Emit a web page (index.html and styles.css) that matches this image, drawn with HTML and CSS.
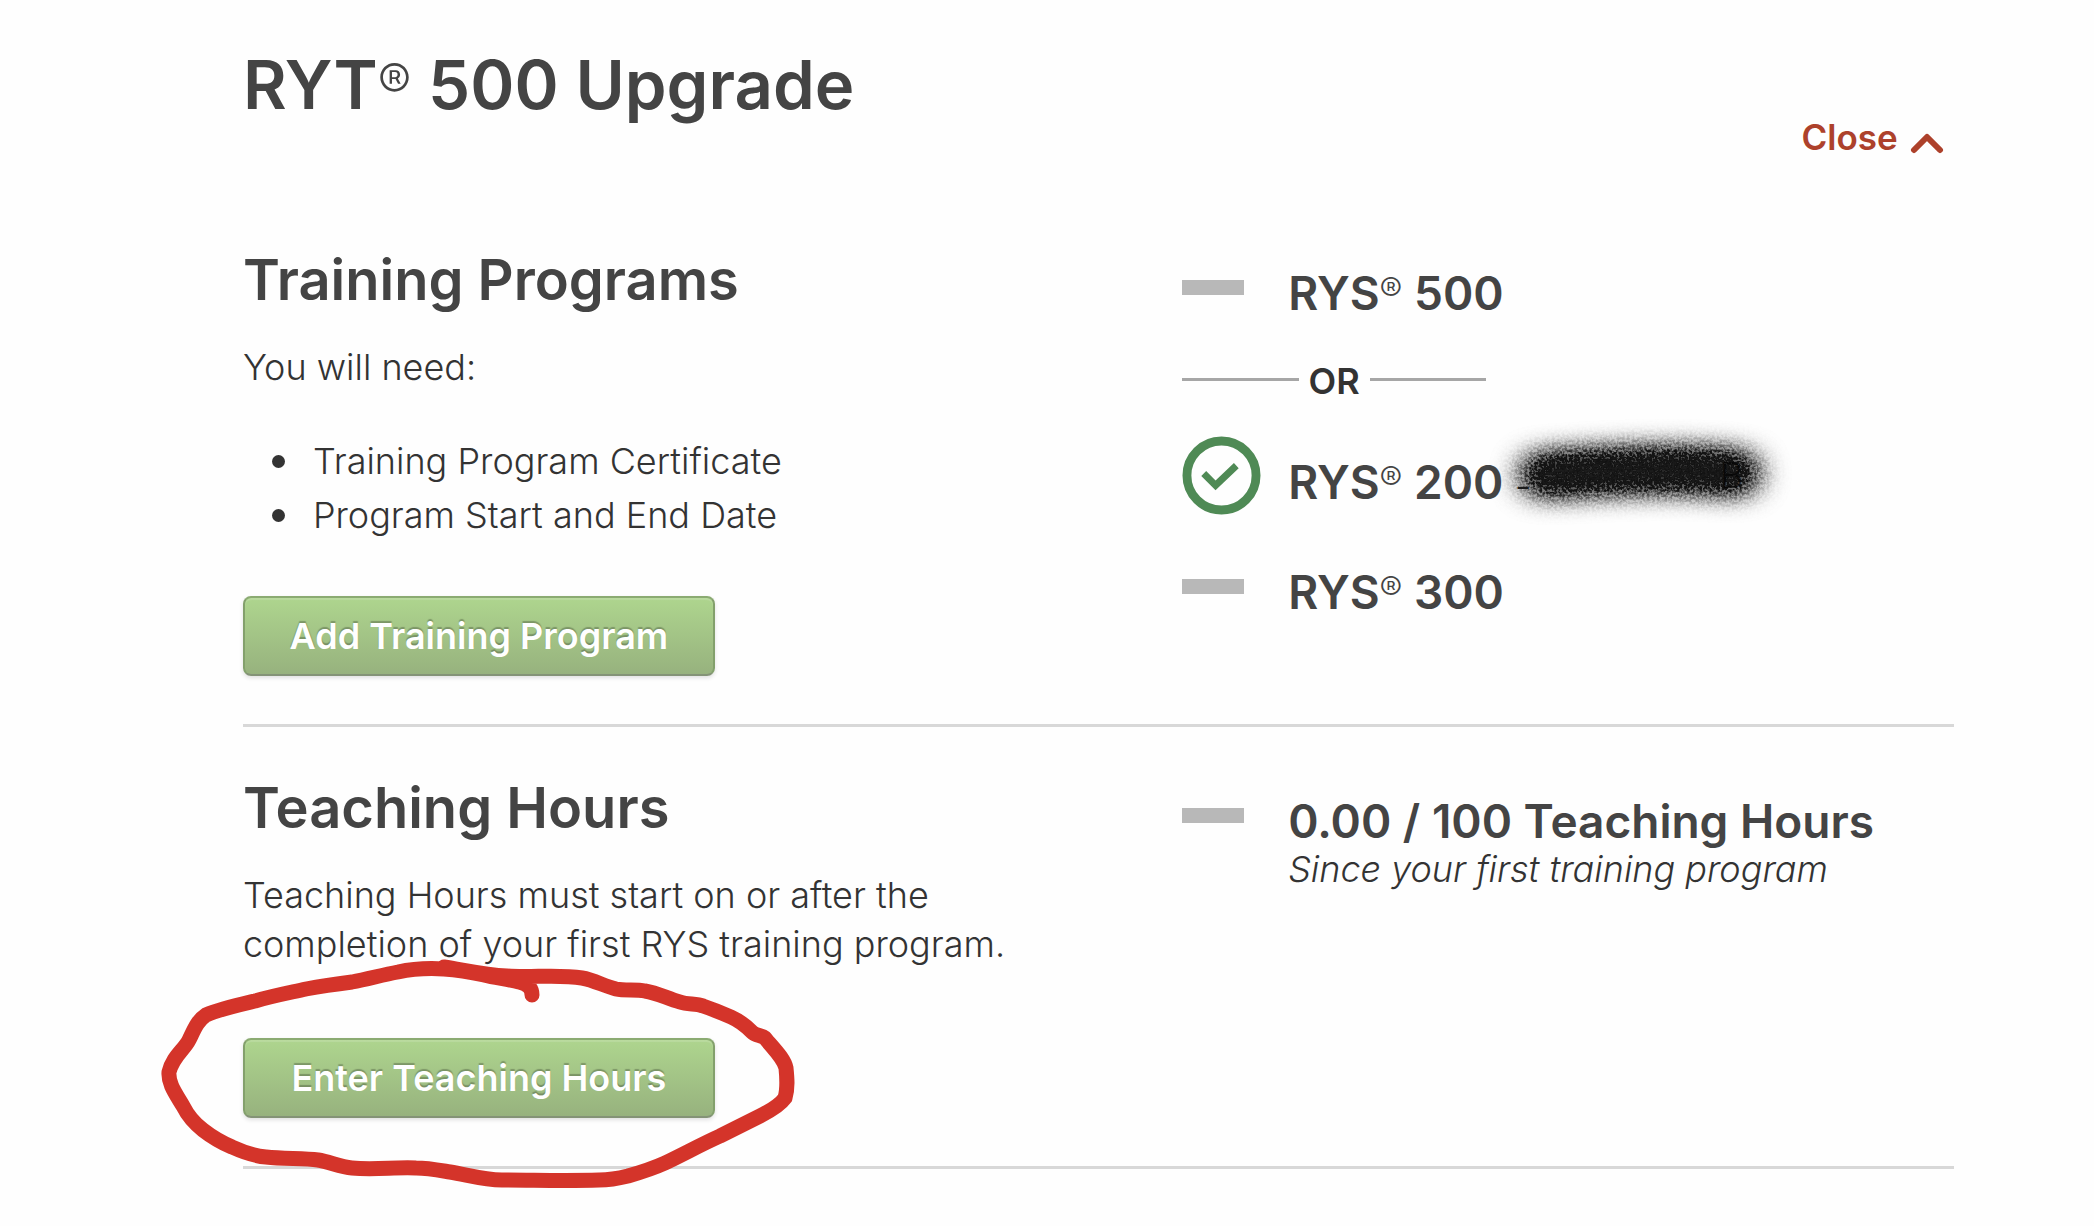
FILE: index.html
```html
<!DOCTYPE html>
<html lang="en">
<head>
  <meta charset="utf-8">
  <meta name="viewport" content="width=device-width, initial-scale=1">
  <title>RYT® 500 Upgrade</title>
  <link rel="stylesheet" href="styles.css">
</head>
<body>
  <main class="page">
    <header class="page-header">
      <h1 class="page-title">RYT<sup class="reg">®</sup> 500 Upgrade</h1>
      <a class="close-link" href="#">Close
        <svg class="chevron" viewBox="0 0 34 22" aria-hidden="true"><path d="M4 18 17 5l13 13"/></svg>
      </a>
    </header>

    <section class="section">
      <div class="details">
        <h2 class="section-title">Training Programs</h2>
        <p class="text">You will need:</p>
        <ul class="needs">
          <li>Training Program Certificate</li>
          <li>Program Start and End Date</li>
        </ul>
        <div class="action"><button class="button" type="button">Add Training Program</button></div>
      </div>

      <div class="progress">
        <div class="item">
          <span class="dash"></span>
          <h3 class="item-title">RYS<sup class="reg">®</sup> 500</h3>
        </div>
        <div class="or">OR</div>
        <div class="item item-done">
          <svg class="check" viewBox="0 0 80 80" role="img" aria-label="Complete">
            <circle cx="40" cy="40" r="35"/>
            <path class="tick" d="M22 38l12 12 21-20"/>
          </svg>
          <h3 class="item-title">RYS<sup class="reg">®</sup> 200 <span class="school">-</span>
            <svg class="scribble" viewBox="0 0 320 120" aria-hidden="true">
              <defs>
                <filter id="spray" x="0" y="0" width="320" height="120" filterUnits="userSpaceOnUse" color-interpolation-filters="sRGB">
                  <feGaussianBlur in="SourceGraphic" stdDeviation="15 12" result="soft"/>
                  <feTurbulence type="fractalNoise" baseFrequency="0.4" numOctaves="2" seed="4" result="noise"/>
                  <feColorMatrix in="noise" type="matrix" values="0 0 0 0 1  0 0 0 0 1  0 0 0 0 1  0 0 3 0 -1" result="grain"/>
                  <feComposite in="soft" in2="grain" operator="arithmetic" k1="0.8" k2="0.95" k3="0" k4="0"/>
                </filter>
              </defs>
              <g filter="url(#spray)"><path class="spray" d="M64 65 C120 61 200 57 256 63"/></g>
              <text class="spray-letter" x="240" y="78">B</text>
            </svg>
          </h3>
        </div>
        <div class="item">
          <span class="dash"></span>
          <h3 class="item-title">RYS<sup class="reg">®</sup> 300</h3>
        </div>
      </div>
    </section>

    <section class="section">
      <div class="details">
        <h2 class="section-title">Teaching Hours</h2>
        <p class="text">Teaching Hours must start on or after the completion of your first RYS training program.</p>
        <div class="action action-late">
          <button class="button" type="button">Enter Teaching Hours</button>
          <svg class="marker" viewBox="150 950 660 250" aria-hidden="true">
            <path d="M532 997C532 990 528 986 519 984C508 981 496 980 484 977C470 974 458 972 444 971C428 970 412 971 398 974C382 977 368 981 352 984C336 986 322 988 306 991C288 995 272 998 255 1003C238 1007 220 1011 206 1017C197 1023 194 1032 189 1042C184 1052 173 1058 169 1074C168 1086 176 1096 183 1108C188 1118 194 1125 203 1132C212 1139 220 1144 232 1149C243 1154 254 1158 266 1159C284 1161 304 1160 318 1162C330 1164 340 1169 352 1170C374 1172 396 1169 416 1170C428 1170 438 1172 450 1174C468 1177 484 1182 502 1182C534 1182 566 1183 599 1182C610 1182 620 1180 628 1178C642 1174 654 1170 665 1165C684 1156 702 1146 720 1138C734 1131 748 1124 760 1118C770 1113 780 1107 785 1100C788 1090 787 1080 786 1070C784 1060 772 1049 765 1040C761 1037 756 1038 752 1034C746 1028 740 1023 731 1019C722 1015 712 1011 703 1008C696 1005 688 1007 680 1004C668 1001 658 995 645 993C636 991 625 993 616 991C604 988 594 982 582 980C558 976 530 980 507 978C484 977 464 972 444 969"/>
          </svg>
        </div>
      </div>

      <div class="progress">
        <div class="item">
          <span class="dash"></span>
          <div>
            <h3 class="item-title">0.00 / 100 Teaching Hours</h3>
            <p class="note">Since your first training program</p>
          </div>
        </div>
      </div>
    </section>
  </main>
</body>
</html>
```
FILE: styles.css
```css
* {
  box-sizing: border-box;
}

body {
  margin: 0;
  background: #fefefe;
  color: #333;
  font-family: Inter, "Liberation Sans", sans-serif;
  font-size: 36px;
  font-weight: 300;
  line-height: 49px;
}

h1, h2, h3, p, ul {
  margin: 0;
}

h1, h2, h3 {
  color: #444;
  font-weight: 600;
}

.page {
  padding: 44px 6.7% 40px 11.6%;
}

.page-header {
  display: flex;
  justify-content: space-between;
  align-items: flex-start;
  padding-right: 10px;
  padding-bottom: 86px;
}

.page-title {
  font-size: 67px;
  line-height: 82px;
  margin-bottom: -2px;
}

.reg {
  font-size: 34px;
  font-weight: 300;
  line-height: 0;
  vertical-align: 8px;
}

.page-title .reg {
  font-size: 50px;
  vertical-align: 9px;
}

.close-link {
  display: flex;
  align-items: center;
  gap: 12px;
  padding-top: 71px;
  color: #ad412b;
  font-size: 35px;
  font-weight: 600;
  line-height: 44px;
  text-decoration: none;
}

.chevron {
  width: 34px;
  height: 22px;
  margin-top: 12px;
  fill: none;
  stroke: #ad412b;
  stroke-width: 6;
  stroke-linecap: round;
  stroke-linejoin: round;
}

/* Two columns: what to do on the left, status on the right */
.section {
  display: grid;
  grid-template-columns: 549fr 451fr;
  padding-bottom: 48px;
  border-bottom: 3px solid #d8d8d8;
}

.section + .section {
  padding-top: 46px;
}

.section-title {
  margin-bottom: 28px;
  font-size: 56px;
  line-height: 70px;
}

.text {
  max-width: 800px;
}

.needs {
  margin-top: 42px;
  padding: 0;
  list-style: none;
}

.needs li {
  display: flex;
  align-items: center;
  gap: 28px;
  padding-left: 29px;
  line-height: 54px;
}

.needs li::before {
  content: "";
  width: 13px;
  height: 13px;
  border-radius: 50%;
  background: #333;
}

.action {
  position: relative;
  margin-top: 54px;
}

.action-late {
  margin-top: 69px;
}

.button {
  display: block;
  width: 472px;
  height: 80px;
  padding: 0;
  border: 2px solid #83a06c;
  border-top-color: #8bab72;
  border-bottom-color: #849377;
  border-radius: 8px;
  background: linear-gradient(#aed58e, #97b27e);
  box-shadow: 0 2px 4px rgba(0, 0, 0, 0.12), inset 0 2px 1px rgba(255, 255, 255, 0.15);
  color: #fff;
  font: 600 36px/76px Inter, "Liberation Sans", sans-serif;
  text-shadow: 0 -2px 1px rgba(0, 0, 0, 0.25);
}

/* Hand-drawn ring around the button */
.marker {
  position: absolute;
  top: -90px;
  left: -93px;
  width: 660px;
  height: 250px;
  fill: none;
  stroke: #d4342a;
  stroke-width: 15;
  stroke-linecap: round;
  stroke-linejoin: round;
  pointer-events: none;
}

.progress {
  padding-top: 22px;
}

.item {
  display: grid;
  grid-template-columns: 106px 1fr;
  align-items: start;
}

.item-title {
  position: relative;
  font-size: 46px;
  line-height: 52px;
}

.dash {
  width: 62px;
  height: 15px;
  margin-top: 13px;
  background: #b8b8b8;
}

.or {
  display: flex;
  align-items: center;
  gap: 10px;
  width: 304px;
  margin-top: 38px;
  font-weight: 600;
}

.or::before,
.or::after {
  content: "";
  flex: 1;
  height: 3px;
  margin-bottom: 4px;
  background: #a6a6a6;
}

.item-done {
  margin: 30px 0 51px;
}

.item-done .item-title {
  padding-top: 20px;
}

.check {
  width: 79px;
  height: 79px;
  fill: none;
  stroke: #4f8a55;
  stroke-width: 9;
}

.tick {
  stroke-width: 7;
}

.school {
  color: #222;
  font-size: 36px;
  font-weight: 300;
}

/* Sprayed cover over the school's name */
.scribble {
  position: absolute;
  top: -26px;
  left: 192px;
  width: 320px;
  height: 120px;
}

.spray {
  fill: none;
  stroke: #111;
  stroke-width: 44;
  stroke-linecap: round;
}

.spray-letter {
  fill: #000;
  fill-opacity: 0.6;
  font-size: 36px;
  font-weight: 300;
}

.note {
  font-style: italic;
  line-height: 44px;
}
```
